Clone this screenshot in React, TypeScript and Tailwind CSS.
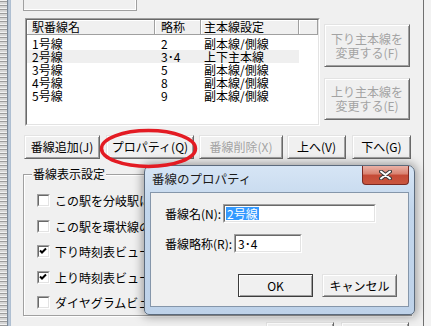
import React from "react";

const raised =
  "bg-[#f0f0f0] border border-t-[#e3e3e3] border-l-[#e3e3e3] border-r-[#696969] border-b-[#696969] shadow-[inset_1px_1px_0_#ffffff,inset_-1px_-1px_0_#a0a0a0]";

function Btn({ w, h = 24, children, disabled = false, extra = "" }: { w: number; h?: number; children?: React.ReactNode; disabled?: boolean; extra?: string }) {
  return (
    <div
      className={`${raised} flex items-center justify-center text-center leading-[14px] whitespace-nowrap ${disabled ? "text-[#a3a3a3]" : "text-black"} ${extra}`}
      style={{ width: w, height: h }}
    >
      {children}
    </div>
  );
}

function Sunken({ className, children }: { className: string; children?: React.ReactNode }) {
  return (
    <div className={`border border-t-[#a0a0a0] border-l-[#a0a0a0] border-r-white border-b-white ${className}`}>
      <div className="w-full h-full border border-t-[#696969] border-l-[#696969] border-r-[#e3e3e3] border-b-[#e3e3e3] bg-white overflow-hidden">
        {children}
      </div>
    </div>
  );
}

function Check({ checked, label }: { checked: boolean; label: string }) {
  return (
    <div className="flex items-center h-[13px]">
      <Sunken className="w-[13px] h-[13px] shrink-0">
        {checked && (
          <svg width="9" height="9" viewBox="0 0 9 9" className="block">
            <path d="M1 3.5 L3 5.5 L7 1.5" stroke="#000" strokeWidth="2" fill="none" />
          </svg>
        )}
      </Sunken>
      <span className="ml-[5px] leading-[13px] whitespace-nowrap">{label}</span>
    </div>
  );
}

const rows = [
  ["1号線", "2", "副本線/側線"],
  ["2号線", "3･4", "上下主本線"],
  ["3号線", "5", "副本線/側線"],
  ["4号線", "8", "副本線/側線"],
  ["5号線", "9", "副本線/側線"],
];

export default function App() {
  const hcell =
    "h-full bg-[#f0f0f0] border-r border-b border-[#a0a0a0] shadow-[inset_1px_1px_0_#ffffff] leading-[13px] whitespace-nowrap";
  return (
    <div className="relative w-[431px] h-[326px] overflow-hidden bg-[#f0f0f0] flex text-[12px] text-black font-[family-name:'Noto_Sans_CJK_JP','Liberation_Sans',sans-serif]">
      {/* left strip */}
      <div className="w-[7px] shrink-0 bg-[image:repeating-linear-gradient(180deg,#f2f2f2_0px,#f2f2f2_1px,#9c9c9c_1px,#9c9c9c_2px,#d6d6d6_2px,#d6d6d6_4px)]" />
      <div className="w-[4px] shrink-0 bg-[image:linear-gradient(90deg,#5f6d7e,#c3d1e1_45%,#a9bacd)]" />

      {/* main window client */}
      <div className="w-[413px] shrink-0 border-r border-[#707070] flex flex-col">
        <div className="ml-[12px] w-[114px] h-[11px] shrink-0 border-x border-b border-[#a0a0a0] shadow-[inset_-1px_-1px_0_#ffffff]" />

        <div className="mt-[7px] flex shrink-0">
          <Sunken className="ml-[14px] w-[295px] h-[108px]">
            <div className="flex h-[15px]">
              <div className={`${hcell} w-[128px] pl-[5px]`}>駅番線名</div>
              <div className={`${hcell} w-[46px] pl-[6px]`}>略称</div>
              <div className={`${hcell} w-[98px] pl-[3px]`}>主本線設定</div>
              <div className={`${hcell} flex-1`} />
            </div>
            <div className="pt-[2px]">
              {rows.map((r, i) => (
                <div key={i} className="flex h-[13px] leading-[13px] whitespace-nowrap">
                  <div className={`flex w-[272px] ${i === 1 ? "bg-[#efefef]" : ""}`}>
                    <div className="w-[128px] pl-[5px]">{r[0]}</div>
                    <div className="w-[46px] pl-[6px]">{r[1]}</div>
                    <div className="w-[98px] pl-[3px]">{r[2]}</div>
                  </div>
                </div>
              ))}
            </div>
          </Sunken>
          <div className="ml-[4px] pt-[6px] flex flex-col">
            <Btn w={86} h={43} disabled>
              <span>
                下り主本線を
                <br />
                変更する(F)
              </span>
            </Btn>
            <div className="mt-[11px]">
              <Btn w={86} h={42} disabled>
                <span>
                  上り主本線を
                  <br />
                  変更する(E)
                </span>
              </Btn>
            </div>
          </div>
        </div>

        <div className="mt-[9px] ml-[13px] flex shrink-0">
          <Btn w={76}>番線追加(J)</Btn>
          <div className="ml-[6px]">
            <Btn w={88}>プロパティ(Q)</Btn>
          </div>
          <div className="ml-[5px]">
            <Btn w={84} disabled>番線削除(X)</Btn>
          </div>
          <div className="ml-[4px]">
            <Btn w={59}>上へ(V)</Btn>
          </div>
          <div className="ml-[6px]">
            <Btn w={59}>下へ(G)</Btn>
          </div>
        </div>

        <div className="relative mt-[15px] ml-[12px] w-[389px] h-[142px] shrink-0 border border-[#a0a0a0] shadow-[inset_1px_1px_0_#ffffff,1px_1px_0_#ffffff]">
          <div className="absolute left-[8px] top-[-8px] px-[1px] bg-[#f0f0f0] leading-[14px] whitespace-nowrap">番線表示設定</div>
          <div className="pt-[19px] pl-[13px] flex flex-col gap-[12.5px]">
            <Check checked={false} label="この駅を分岐駅にする" />
            <Check checked={false} label="この駅を環状線の起点とする" />
            <Check checked={true} label="下り時刻表ビューに表示する" />
            <Check checked={true} label="上り時刻表ビューに表示する" />
            <Check checked={false} label="ダイヤグラムビューに表示する" />
          </div>
        </div>

        <div className="mt-[6px] flex justify-end pr-[14px] gap-[7px] shrink-0">
          <Btn w={68} h={23} />
          <Btn w={68} h={23} />
        </div>
      </div>
      <div className="flex-1 bg-[#f2f2f2]" />

      {/* dialog */}
      <div className="absolute left-[144px] top-[165px] w-[271px] h-[150px] border border-[#5c6b7d] rounded-t-[7px] rounded-b-[5px] bg-[image:linear-gradient(180deg,#d6e5f5,#c2d6ec_30%,#bed2e9)] shadow-[0_0_10px_2px_rgba(0,0,0,0.35)] flex flex-col">
        <div className="h-[26px] pl-[7px] flex items-center leading-[16px] text-[12.5px] text-[#1b1b1b] whitespace-nowrap">番線のプロパティ</div>
        <div className="absolute left-[217px] top-0 w-[47px] h-[19px] rounded-b-[4px] border border-t-0 border-[#7a2a22] bg-[image:linear-gradient(180deg,#eab1a6,#d9816f_45%,#c54a36_50%,#c9563f)] flex items-center justify-center">
          <svg width="13" height="10" viewBox="0 0 13 10" className="block">
            <path d="M2 1.5 L11 8.5 M11 1.5 L2 8.5" stroke="#3a3a3a" strokeWidth="4" strokeLinecap="round" />
            <path d="M2 1.5 L11 8.5 M11 1.5 L2 8.5" stroke="#ffffff" strokeWidth="2" strokeLinecap="round" />
          </svg>
        </div>
        <div className="mx-[5px] h-[115px] border border-[#8596aa] bg-[#f0f0f0] flex flex-col">
          <div className="mt-[11px] pl-[14px] flex items-center h-[19px]">
            <div className="w-[58px] leading-[14px] whitespace-nowrap">番線名(N):</div>
            <Sunken className="w-[153px] h-[19px]">
              <div className="pl-[1px] pt-[1px] flex">
                <span className="bg-[#3399ff] text-white leading-[13px] px-[1px]">2号線</span>
              </div>
            </Sunken>
          </div>
          <div className="mt-[11px] pl-[14px] flex items-center h-[19px]">
            <div className="w-[69px] leading-[14px] whitespace-nowrap">番線略称(R):</div>
            <Sunken className="w-[68px] h-[19px]">
              <div className="pl-[2px] pt-[1px] leading-[13px]">3･4</div>
            </Sunken>
          </div>
          <div className="mt-[21px] pl-[87px] flex gap-[9px]">
            <Btn w={75} h={23} extra="outline outline-1 outline-[#3c3c3c] -outline-offset-1">OK</Btn>
            <Btn w={75} h={23}>キャンセル</Btn>
          </div>
        </div>
      </div>

      {/* red annotation ellipse */}
      <svg className="absolute left-[98px] top-[126px]" width="102" height="45" viewBox="0 0 102 45">
        <ellipse cx="50.5" cy="22.5" rx="47" ry="18" fill="none" stroke="#e31b23" strokeWidth="3.5" />
      </svg>
    </div>
  );
}
